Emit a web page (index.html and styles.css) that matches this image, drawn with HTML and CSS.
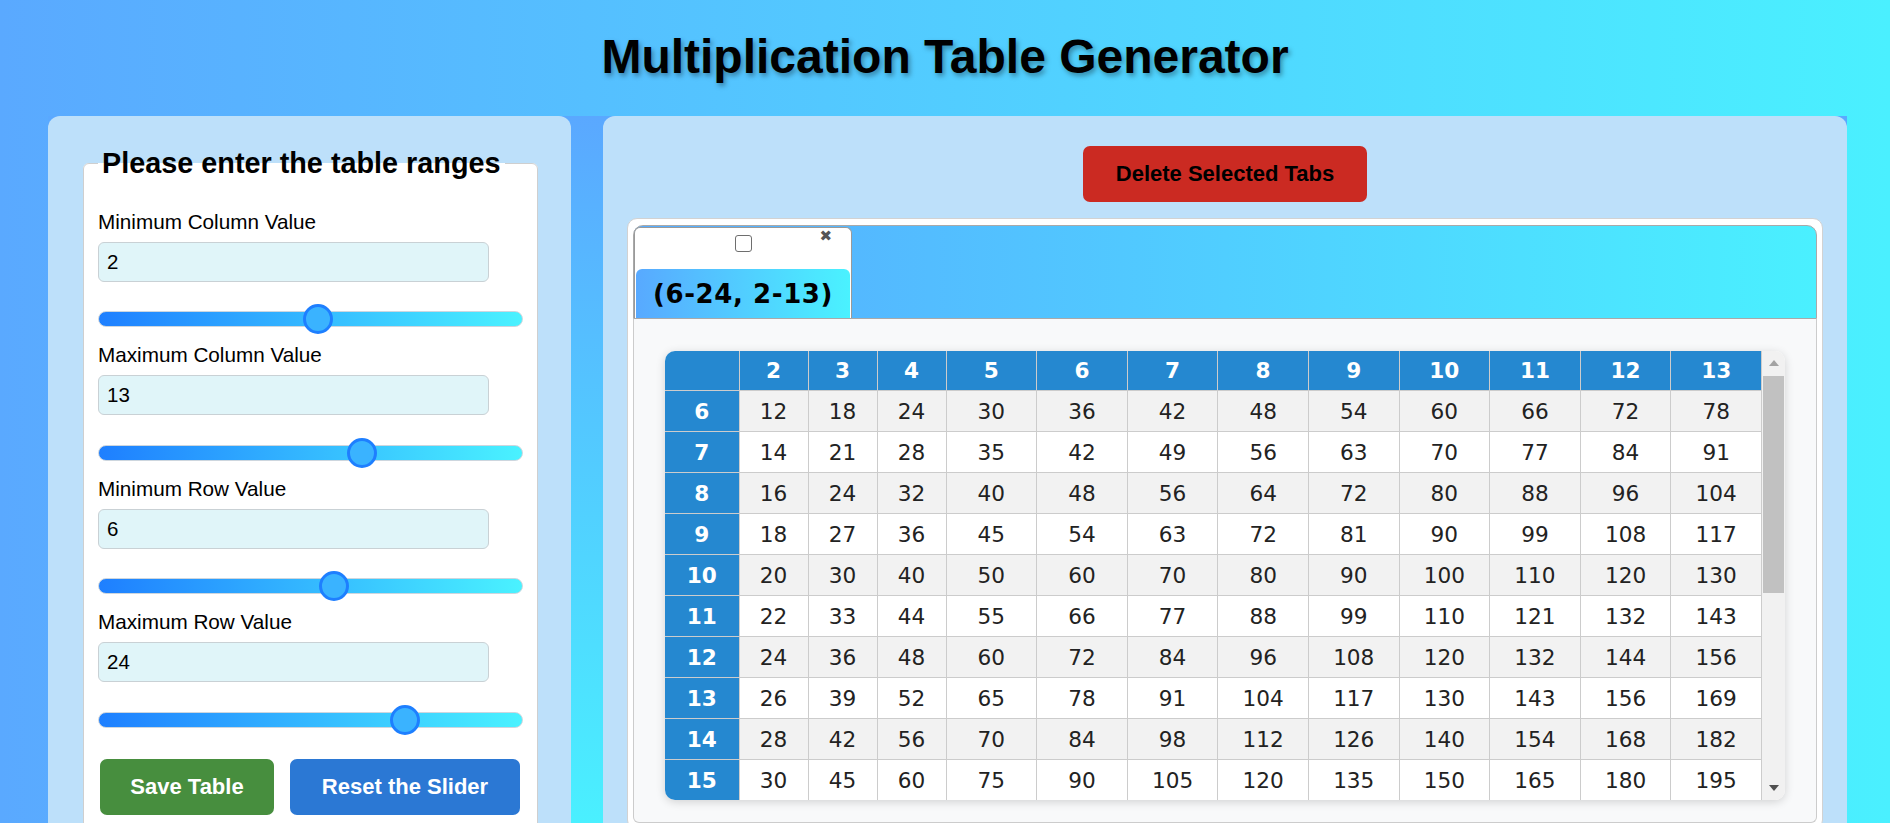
FILE: index.html
```html
<!DOCTYPE html>
<html lang="en">
<head>
<meta charset="utf-8">
<title>Multiplication Table Generator</title>
<link rel="stylesheet" href="styles.css">
</head>
<body>
<h1 class="title">Multiplication Table Generator</h1>
<div class="main">
  <section class="panel left">
    <form class="ranges">
      <fieldset class="box">
        <legend class="box-legend">Please enter the table ranges</legend>
        <div class="field first">
          <label class="lbl" for="minc">Minimum Column Value</label>
          <input class="num" id="minc" type="text" value="2">
          <input class="range" type="range" min="-50" max="50" value="2">
        </div>
        <div class="field">
          <label class="lbl" for="maxc">Maximum Column Value</label>
          <input class="num" id="maxc" type="text" value="13">
          <input class="range" type="range" min="-50" max="50" value="13">
        </div>
        <div class="field">
          <label class="lbl" for="minr">Minimum Row Value</label>
          <input class="num" id="minr" type="text" value="6">
          <input class="range" type="range" min="-50" max="50" value="6">
        </div>
        <div class="field">
          <label class="lbl" for="maxr">Maximum Row Value</label>
          <input class="num" id="maxr" type="text" value="24">
          <input class="range" type="range" min="-50" max="50" value="24">
        </div>
        <div class="btnrow">
          <button type="button" class="btn save">Save Table</button>
          <button type="button" class="btn reset">Reset the Slider</button>
        </div>
      </fieldset>
    </form>
  </section>
  <section class="panel right">
    <button type="button" class="delete">Delete Selected Tabs</button>
    <div class="tabs">
      <div class="tabbar">
        <div class="tab">
          <div class="tab-top"><input class="tabcheck" type="checkbox"></div>
          <span class="tab-close">&#10006;</span>
          <div class="tab-label">(6-24, 2-13)</div>
        </div>
      </div>
      <div class="tabpanel">
        <div class="tablewrap">
          <div class="tablearea">
            <table class="mtable">
              <colgroup>
                <col class="c-rh"><col class="c-n"><col class="c-n"><col class="c-n">
                <col><col><col><col><col><col><col><col><col>
              </colgroup>
              <thead>
                <tr><th></th><th>2</th><th>3</th><th>4</th><th>5</th><th>6</th><th>7</th><th>8</th><th>9</th><th>10</th><th>11</th><th>12</th><th>13</th></tr>
              </thead>
              <tbody>
                <tr><th>6</th><td>12</td><td>18</td><td>24</td><td>30</td><td>36</td><td>42</td><td>48</td><td>54</td><td>60</td><td>66</td><td>72</td><td>78</td></tr>
                <tr><th>7</th><td>14</td><td>21</td><td>28</td><td>35</td><td>42</td><td>49</td><td>56</td><td>63</td><td>70</td><td>77</td><td>84</td><td>91</td></tr>
                <tr><th>8</th><td>16</td><td>24</td><td>32</td><td>40</td><td>48</td><td>56</td><td>64</td><td>72</td><td>80</td><td>88</td><td>96</td><td>104</td></tr>
                <tr><th>9</th><td>18</td><td>27</td><td>36</td><td>45</td><td>54</td><td>63</td><td>72</td><td>81</td><td>90</td><td>99</td><td>108</td><td>117</td></tr>
                <tr><th>10</th><td>20</td><td>30</td><td>40</td><td>50</td><td>60</td><td>70</td><td>80</td><td>90</td><td>100</td><td>110</td><td>120</td><td>130</td></tr>
                <tr><th>11</th><td>22</td><td>33</td><td>44</td><td>55</td><td>66</td><td>77</td><td>88</td><td>99</td><td>110</td><td>121</td><td>132</td><td>143</td></tr>
                <tr><th>12</th><td>24</td><td>36</td><td>48</td><td>60</td><td>72</td><td>84</td><td>96</td><td>108</td><td>120</td><td>132</td><td>144</td><td>156</td></tr>
                <tr><th>13</th><td>26</td><td>39</td><td>52</td><td>65</td><td>78</td><td>91</td><td>104</td><td>117</td><td>130</td><td>143</td><td>156</td><td>169</td></tr>
                <tr><th>14</th><td>28</td><td>42</td><td>56</td><td>70</td><td>84</td><td>98</td><td>112</td><td>126</td><td>140</td><td>154</td><td>168</td><td>182</td></tr>
                <tr><th>15</th><td>30</td><td>45</td><td>60</td><td>75</td><td>90</td><td>105</td><td>120</td><td>135</td><td>150</td><td>165</td><td>180</td><td>195</td></tr>
              </tbody>
            </table>
          </div>
          <div class="vscroll" aria-hidden="true">
            <div class="sb-btn sb-up"></div>
            <div class="sb-thumb"></div>
            <div class="sb-space"></div>
            <div class="sb-btn sb-down"></div>
          </div>
        </div>
      </div>
    </div>
  </section>
</div>
</body>
</html>
```

FILE: styles.css
```css
html, body {
  margin: 0;
  padding: 0;
}

body {
  font-family: "Liberation Sans", Arial, sans-serif;
  color: #000;
  background: linear-gradient(to right, #5aa9ff, #4af0ff);
  min-height: 100vh;
  overflow: hidden;
}

.title {
  margin: 0 0 32px 0;
  padding-top: 29px;
  height: 55px;
  line-height: 55px;
  font-size: 48px;
  font-weight: bold;
  text-align: center;
  color: #000;
  text-shadow: 2px 3px 5px rgba(0, 0, 0, 0.35);
}

.main {
  display: flex;
  gap: 32px;
  margin: 0 43px 0 48px;
  background: linear-gradient(to bottom, #5aa8ff 0px, #4af0ff 707px);
}

.panel {
  background: #bde0fa;
  border-radius: 12px;
  box-sizing: border-box;
}

.left {
  width: 523px;
  flex: none;
  padding: 31px 33px 40px 35px;
}

.right {
  flex: 1;
  min-width: 0;
  padding: 30px 24px 40px 24px;
}

/* ---------- form ---------- */
.ranges {
  margin: 0;
}

.box {
  margin: 0;
  padding: 0 14px 24px 14px;
  border: 1px solid #cfcfcf;
  border-radius: 6px;
  background: #fff;
  min-width: 0;
}

.box-legend {
  padding: 0 4px;
  font-size: 28.8px;
  line-height: 33px;
  font-weight: bold;
}

.field {
  display: flex;
  flex-direction: column;
  margin-top: 9px;
}

.field.first {
  margin-top: 29.5px;
}

.lbl {
  display: block;
  font-size: 20.7px;
  line-height: 24px;
  color: #000;
}

.num {
  margin: 8px 0 0 0;
  width: 391px;
  height: 40px;
  box-sizing: border-box;
  padding: 0 8px;
  border: 1px solid #c9d1d5;
  border-radius: 6px;
  background: #e0f5f9;
  font-family: "Liberation Sans", Arial, sans-serif;
  font-size: 20.5px;
  color: #000;
  outline: none;
}

.range {
  -webkit-appearance: none;
  appearance: none;
  margin: 22.5px 0 0 0;
  padding: 0;
  width: 100%;
  height: 30px;
  background: transparent;
}

.range::-webkit-slider-runnable-track {
  height: 16px;
  box-sizing: border-box;
  border-radius: 8px;
  border: 1px solid #cdd6de;
  background: linear-gradient(to right, #1e7fff, #4af2ff);
}

.range::-webkit-slider-thumb {
  -webkit-appearance: none;
  appearance: none;
  width: 30px;
  height: 30px;
  box-sizing: border-box;
  margin-top: -8px;
  border-radius: 50%;
  border: 3px solid #1e7fff;
  background: #3ab3ff;
}

.btnrow {
  display: flex;
  gap: 16px;
  margin-top: 24px;
  padding-left: 2px;
}

.btn {
  height: 56px;
  padding: 0;
  border: none;
  border-radius: 7px;
  color: #fff;
  font-family: "Liberation Sans", Arial, sans-serif;
  font-size: 22px;
  font-weight: bold;
}

.save {
  width: 174px;
  background: #478e3e;
}

.reset {
  width: 230px;
  background: #2b78d4;
}

/* ---------- tabs ---------- */
.delete {
  display: block;
  margin: 0 auto;
  width: 284px;
  height: 56px;
  padding: 0;
  border: none;
  border-radius: 7px;
  background: #cb2a22;
  color: #000;
  font-family: "Liberation Sans", Arial, sans-serif;
  font-size: 22px;
  font-weight: bold;
}

.tabs {
  margin-top: 16px;
  background: #fff;
  border: 1px solid #d2d2d2;
  border-radius: 10px;
  padding: 6px 5px 6px 5px;
}

.tabbar {
  height: 94px;
  box-sizing: border-box;
  border: 1px solid #a9a9a9;
  border-radius: 10px 10px 0 0;
  background: linear-gradient(to right, #56acff, #4af0ff);
  padding-top: 1px;
  display: flex;
  align-items: flex-end;
}

.tab {
  position: relative;
  width: 218px;
  height: 91px;
  box-sizing: border-box;
  border: 1px solid #9a9a9a;
  border-bottom: none;
  border-radius: 6px 6px 0 0;
  background: #fff;
  padding: 0 1px;
  display: flex;
  flex-direction: column;
}

.tab-top {
  height: 41px;
  box-sizing: border-box;
  padding-top: 7px;
  display: flex;
  justify-content: center;
  align-items: flex-start;
}

.tabcheck {
  -webkit-appearance: none;
  appearance: none;
  margin: 0;
  width: 17px;
  height: 17px;
  box-sizing: border-box;
  border: 1.5px solid #6e6e6e;
  border-radius: 3px;
  background: #fff;
}

.tab-close {
  position: absolute;
  top: 1px;
  right: 19px;
  font-family: "DejaVu Sans", sans-serif;
  font-size: 15px;
  line-height: 1;
  color: #555;
}

.tab-label {
  flex: 1;
  display: flex;
  align-items: center;
  justify-content: center;
  border-radius: 6px 6px 0 0;
  background: linear-gradient(to right, #58a9ff, #4af2ff);
  font-family: "DejaVu Sans", Verdana, sans-serif;
  font-size: 26px;
  font-weight: bold;
  letter-spacing: 0.6px;
  color: #000;
}

.tabpanel {
  border: 1px solid #cccccc;
  border-top: none;
  border-radius: 0 0 6px 6px;
  background: #f8f9fa;
  padding: 32px 31px 22px 31px;
}

.tablewrap {
  display: flex;
  height: 449px;
  border-radius: 10px;
  overflow: hidden;
  background: #fff;
  box-shadow: 0 2px 10px rgba(0, 0, 0, 0.16);
}

.tablearea {
  flex: 1;
  min-width: 0;
  overflow: hidden;
}

.mtable {
  width: 100%;
  table-layout: fixed;
  border-collapse: collapse;
  font-family: "DejaVu Sans", Verdana, sans-serif;
  font-size: 21.6px;
}

.c-rh {
  width: 74px;
}

.c-n {
  width: 69px;
}

.mtable th,
.mtable td {
  border: 1px solid #cccccc;
  padding: 7.5px 2px;
  line-height: 25px;
  text-align: center;
  white-space: nowrap;
}

.mtable thead th {
  border-top: none;
  padding: 7px 2px;
}

.mtable tr > :first-child {
  border-left: none;
}

.mtable th {
  background: #2588d0;
  color: #fff;
  font-weight: bold;
}

.mtable td {
  color: #222;
  background: #fff;
}

.mtable tbody tr:nth-child(odd) td {
  background: #f2f2f2;
}

/* ---------- scrollbar ---------- */
.vscroll {
  flex: none;
  width: 23px;
  background: #f1f1f1;
  display: flex;
  flex-direction: column;
}

.sb-btn {
  height: 24px;
  flex: none;
  display: flex;
  align-items: center;
  justify-content: center;
}

.sb-up::before {
  content: "";
  width: 0;
  height: 0;
  border-left: 5.5px solid transparent;
  border-right: 5.5px solid transparent;
  border-bottom: 6px solid #a3a3a3;
}

.sb-down::before {
  content: "";
  width: 0;
  height: 0;
  border-left: 5.5px solid transparent;
  border-right: 5.5px solid transparent;
  border-top: 6px solid #505050;
}

.sb-thumb {
  flex: none;
  height: 217px;
  margin: 1px 1px 0 1px;
  background: #c1c1c1;
}

.sb-space {
  flex: 1;
}
```
